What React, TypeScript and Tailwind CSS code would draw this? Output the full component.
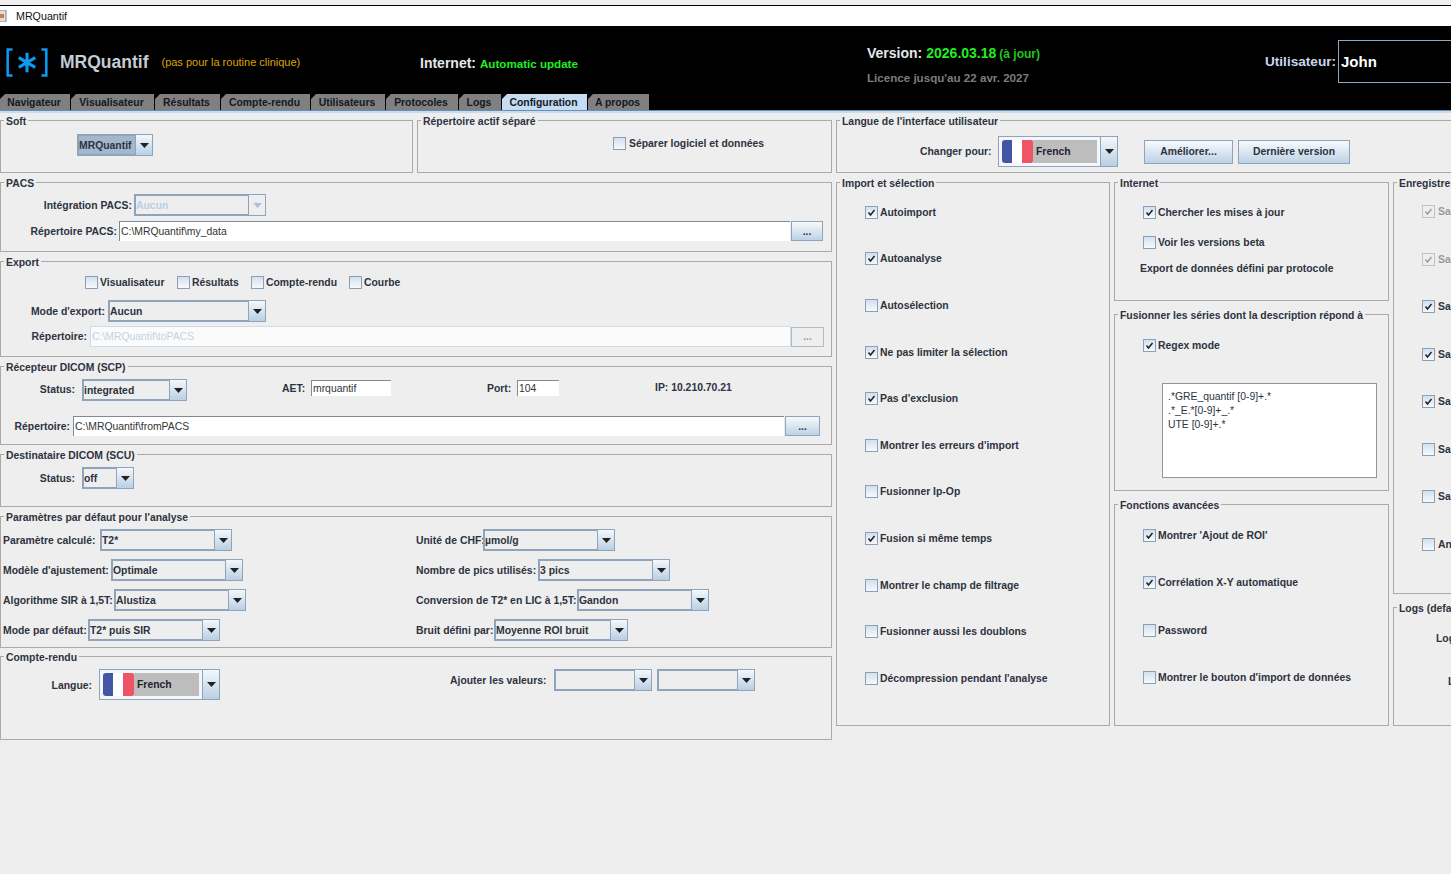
import React from "react";

const Check = ({ on, off, x }: { on?: boolean; off?: boolean; x?: string }) => (
  <span
    className={`w-[13px] h-[13px] shrink-0 border flex items-center justify-center ${
      off
        ? "border-[#b8c4d0] bg-[#eeeeee]"
        : "border-[#8aa0b8] bg-gradient-to-b from-[#d3e0ee] to-[#f6f9fc]"
    } ${x || ""}`}
  >
    {on && (
      <svg width="9" height="9" viewBox="0 0 9 9">
        <path
          d="M1.5 4.5 L3.5 7 L7.5 2"
          fill="none"
          stroke={off ? "#a0a0a0" : "#222"}
          strokeWidth="1.5"
        />
      </svg>
    )}
  </span>
);

const CheckRow = ({
  label,
  on,
  off,
  h,
}: {
  label: string;
  on?: boolean;
  off?: boolean;
  h?: string;
}) => (
  <div className={`flex items-center gap-[2px] whitespace-nowrap ${h || ""}`}>
    <Check on={on} off={off} />
    <span className={off ? "text-[#9a9a9a]" : ""}>{label}</span>
  </div>
);

const Arrow = ({ dim }: { dim?: boolean }) => (
  <svg width="9" height="5" viewBox="0 0 9 5">
    <path d="M0 0 H9 L4.5 5 Z" fill={dim ? "#a9c2dc" : "#222"} />
  </svg>
);

const Combo = ({
  value,
  w,
  h = "h-[22px]",
  dim,
  selected,
}: {
  value?: string;
  w: string;
  h?: string;
  dim?: boolean;
  selected?: boolean;
}) => (
  <div className={`flex shrink-0 border border-[#8ea4bb] ${w} ${h}`}>
    <div
      className={`flex-1 min-w-0 flex items-center pl-[0px] border border-[#8ea4bb] whitespace-nowrap overflow-hidden ${
        selected ? "bg-[#a3b8cc]" : ""
      } ${dim ? "text-[#bcd0e4]" : ""}`}
    >
      {value}
    </div>
    <div
      className={`w-[16px] shrink-0 flex items-center justify-center ${
        dim ? "bg-[#eeeeee]" : "bg-gradient-to-b from-[#f4f8fb] to-[#b9cfe4]"
      }`}
    >
      <Arrow dim={dim} />
    </div>
  </div>
);

const FlagCombo = ({ w, h }: { w: string; h: string }) => (
  <div className={`flex shrink-0 border border-[#8ea4bb] ${w} ${h}`}>
    <div className="flex-1 flex items-center bg-[#f4f6f9] border-r border-[#8ea4bb] pl-[3px] pr-[3px] py-[3px]">
      <div className="w-[10px] h-full bg-[#4355a5] rounded-l-[3px]" />
      <div className="w-[10px] h-full bg-white" />
      <div className="w-[11px] h-full bg-[#ef5466] rounded-r-[2px]" />
      <div className="flex-1 h-full bg-[#bdbdbd] flex items-center pl-[3px] text-[#1d2430]">
        French
      </div>
    </div>
    <div className="w-[16px] flex items-center justify-center bg-gradient-to-b from-[#f4f8fb] to-[#b9cfe4]">
      <Arrow />
    </div>
  </div>
);

const Input = ({
  value,
  w,
  h = "h-[20px]",
  dim,
}: {
  value: string;
  w: string;
  h?: string;
  dim?: boolean;
}) => (
  <div
    className={`shrink-0 flex items-center pl-[1px] font-normal whitespace-nowrap overflow-hidden ${
      dim
        ? "bg-[#fbfbfb] border border-[#cfdbe8] text-[#c4d2e2]"
        : "bg-white border-l border-t border-[#7d8a98] text-[#333333]"
    } ${w} ${h}`}
  >
    {value}
  </div>
);

const Dots = ({ w, off }: { w: string; off?: boolean }) => (
  <div
    className={`shrink-0 h-[20px] flex items-center justify-center border ${w} ${
      off
        ? "border-[#b0bcc8] bg-[#eeeeee] text-[#9a9a9a]"
        : "border-[#8ea4bb] bg-gradient-to-b from-[#f7fafc] to-[#bdd2e6]"
    }`}
  >
    ...
  </div>
);

const Group = ({
  title,
  className,
  children,
}: {
  title: string;
  className: string;
  children?: React.ReactNode;
}) => (
  <div className={`relative shrink-0 border border-[#a9a9a9] ${className}`}>
    <span className="absolute -top-[6px] left-[3px] bg-[#eeeeee] px-[2px] leading-[13px] whitespace-nowrap">
      {title}
    </span>
    {children}
  </div>
);

const tabs = [
  { label: "Navigateur", w: "w-[71px]" },
  { label: "Visualisateur", w: "w-[84px]" },
  { label: "Résultats", w: "w-[66px]" },
  { label: "Compte-rendu", w: "w-[90px]" },
  { label: "Utilisateurs", w: "w-[75px]" },
  { label: "Protocoles", w: "w-[73px]" },
  { label: "Logs", w: "w-[43px]" },
  { label: "Configuration", w: "w-[86px]", active: true },
  { label: "A propos", w: "w-[62px]" },
];

const importItems = [
  { label: "Autoimport", on: true },
  { label: "Autoanalyse", on: true },
  { label: "Autosélection" },
  { label: "Ne pas limiter la sélection", on: true },
  { label: "Pas d'exclusion", on: true },
  { label: "Montrer les erreurs d'import" },
  { label: "Fusionner Ip-Op" },
  { label: "Fusion si même temps", on: true },
  { label: "Montrer le champ de filtrage" },
  { label: "Fusionner aussi les doublons" },
  { label: "Décompression pendant l'analyse" },
];

const saveItems = [
  { label: "Sa", on: true, off: true },
  { label: "Sa", on: true, off: true },
  { label: "Sa", on: true },
  { label: "Sa", on: true },
  { label: "Sa", on: true },
  { label: "Sa" },
  { label: "Sa" },
  { label: "An" },
];

const paramRows = [
  {
    l: "Paramètre calculé:",
    lw: "w-[95px]",
    v: "T2*",
    r: "Unité de CHF:",
    rl: "w-[65px]",
    rv: "µmol/g",
    rw: "w-[132px]",
  },
  {
    l: "Modèle d'ajustement:",
    lw: "w-[106px]",
    v: "Optimale",
    r: "Nombre de pics utilisés:",
    rl: "w-[120px]",
    rv: "3 pics",
    rw: "w-[132px]",
  },
  {
    l: "Algorithme SIR à 1,5T:",
    lw: "w-[109px]",
    v: "Alustiza",
    r: "Conversion de T2* en LIC à 1,5T:",
    rl: "w-[159px]",
    rv: "Gandon",
    rw: "w-[132px]",
  },
  {
    l: "Mode par défaut:",
    lw: "w-[83px]",
    v: "T2* puis SIR",
    r: "Bruit défini par:",
    rl: "w-[76px]",
    rv: "Moyenne ROI bruit",
    rw: "w-[134px]",
  },
];

export default function App() {
  return (
    <div className="w-[1451px] h-[874px] overflow-hidden bg-[#eeeeee] text-[10.4px] leading-[13px] font-bold text-[#2d3340] font-['Liberation_Sans',Arial,sans-serif]">
      {/* window title */}
      <div className="h-[5px] bg-[#f0f0f0]" />
      <div className="h-[21px] bg-white border-t border-black flex items-center pl-[16px] font-normal text-[#111] text-[10.7px] relative">
        <svg className="absolute left-0 top-[4px]" width="7" height="12" viewBox="0 0 7 12">
          <rect x="-6" y="0" width="12" height="12" fill="#d8dde6" stroke="#7a8796" />
          <rect x="0" y="4" width="4" height="4" fill="#d9793a" />
        </svg>
        MRQuantif
      </div>

      {/* header */}
      <div className="h-[84px] bg-black flex flex-col">
        <div className="h-[68px] flex">
          <div className="w-[420px] flex items-center h-[72px] shrink-0 whitespace-nowrap">
            <svg className="ml-[5px]" width="44" height="29" viewBox="0 0 44 30">
              <path d="M7 1.5 H2 V28.5 H7 M37 1.5 H42 V28.5 H37" fill="none" stroke="#0a9cf0" strokeWidth="2.6" />
              <path d="M22 5 V25 M13.5 10 L30.5 20 M30.5 10 L13.5 20" fill="none" stroke="#0a9cf0" strokeWidth="3.2" />
            </svg>
            <span className="ml-[11px] text-[17.5px] leading-[20px] text-[#c4ccd4]">MRQuantif</span>
            <span className="ml-[13px] text-[11px] font-normal text-[#dda600]">(pas pour la routine clinique)</span>
          </div>
          <div className="w-[447px] shrink-0 flex items-baseline pt-[29px] whitespace-nowrap">
            <span className="text-[14px] leading-[16px] text-[#e4e8ec]">Internet:</span>
            <span className="ml-[4px] text-[11.6px] leading-[16px] text-[#22ee22]">Automatic update</span>
          </div>
          <div className="w-[398px] shrink-0 pt-[19px] whitespace-nowrap">
            <div className="flex items-baseline leading-[16px]">
              <span className="text-[14px] text-[#e4e8ec]">Version:</span>
              <span className="ml-[4px] text-[14px] text-[#22ee22]">2026.03.18</span>
              <span className="ml-[3px] text-[12px] text-[#1fc81f]">(à jour)</span>
            </div>
            <div className="mt-[8px] text-[11.6px] leading-[16px] text-[#7d7d7d]">Licence jusqu'au 22 avr. 2027</div>
          </div>
          <div className="flex-1 flex items-center h-[71px] whitespace-nowrap">
            <span className="text-[13.6px] text-[#c8d8e8]">Utilisateur:</span>
            <div className="ml-[2px] w-[130px] h-[43px] border border-[#8fa8c4] flex items-center pl-[2px] text-[15px] text-white">
              John
            </div>
          </div>
        </div>
        <div className="h-[16px] flex items-end">
          {tabs.map((t) => (
            <div key={t.label} className={`h-[16px] shrink-0 pr-[1px] ${t.w}`}>
              <div
                className={`h-full flex items-center justify-center pr-[2px] text-[#14181f] [clip-path:polygon(5px_0,100%_0,100%_100%,0_100%,0_5px)] ${
                  t.active ? "bg-[#c6dcf3]" : "bg-[#808080]"
                }`}
              >
                {t.label}
              </div>
            </div>
          ))}
        </div>
      </div>
      <div className="h-[3px] bg-[#c6dcf3] border-t border-[#6d8db0]" />

      {/* content */}
      <div className="pt-[7px]">
        <div className="flex gap-[4px] h-[53px] w-[1600px]">
          <Group title="Soft" className="w-[413px] h-[53px] pl-[76px] pt-[13px]">
            <Combo value="MRQuantif" w="w-[76px]" selected />
          </Group>
          <Group title="Répertoire actif séparé" className="w-[415px] h-[53px] pl-[195px] pt-[16px]">
            <div className="flex items-center gap-[3px]">
              <Check />
              <span>Séparer logiciel et données</span>
            </div>
          </Group>
          <Group title="Langue de l'interface utilisateur" className="w-[760px] h-[53px] pl-[83px] pt-[15px]">
            <div className="flex items-center">
              <span className="w-[72px] mr-[6px] whitespace-nowrap">Changer pour:</span>
              <FlagCombo w="w-[120px]" h="h-[31px]" />
              <div className="ml-[26px] w-[89px] h-[24px] flex items-center justify-center border border-[#8ea4bb] bg-gradient-to-b from-[#f7fafc] to-[#bdd2e6]">
                Améliorer...
              </div>
              <div className="ml-[5px] w-[112px] h-[24px] flex items-center justify-center border border-[#8ea4bb] bg-gradient-to-b from-[#f7fafc] to-[#bdd2e6]">
                Dernière version
              </div>
            </div>
          </Group>
        </div>

        <div className="flex gap-[4px] mt-[9px] w-[1600px]">
          {/* left column */}
          <div className="w-[832px] shrink-0 flex flex-col">
            <Group title="PACS" className="h-[70px] pt-[11px]">
              <div className="flex items-center">
                <span className="w-[131px] text-right">Intégration PACS:</span>
                <div className="ml-[2px]">
                  <Combo value="Aucun" w="w-[132px]" dim />
                </div>
              </div>
              <div className="flex items-center mt-[5px]">
                <span className="w-[116px] text-right">Répertoire PACS:</span>
                <div className="ml-[2px]">
                  <Input value="C:\MRQuantif\my_data" w="w-[671px]" />
                </div>
                <div className="ml-[1px]">
                  <Dots w="w-[32px]" />
                </div>
              </div>
            </Group>
            <Group title="Export" className="h-[96px] mt-[9px] pt-[14px]">
              <div className="flex items-center pl-[84px]">
                <div className="w-[92px]"><CheckRow label="Visualisateur" /></div>
                <div className="w-[74px]"><CheckRow label="Résultats" /></div>
                <div className="w-[98px]"><CheckRow label="Compte-rendu" /></div>
                <CheckRow label="Courbe" />
              </div>
              <div className="flex items-center mt-[11px]">
                <span className="w-[104px] text-right">Mode d'export:</span>
                <div className="ml-[3px]">
                  <Combo value="Aucun" w="w-[158px]" />
                </div>
              </div>
              <div className="flex items-center mt-[4px]">
                <span className="w-[86px] text-right">Répertoire:</span>
                <div className="ml-[3px]">
                  <Input value="C:\MRQuantif\toPACS" w="w-[701px]" h="h-[21px]" dim />
                </div>
                <Dots w="w-[33px]" off />
              </div>
            </Group>
            <Group title="Récepteur DICOM (SCP)" className="h-[79px] mt-[9px] pt-[12px]">
              <div className="flex items-start">
                <span className="w-[74px] text-right h-[22px] leading-[22px]">Status:</span>
                <div className="ml-[7px]">
                  <Combo value="integrated" w="w-[105px]" />
                </div>
                <span className="ml-[95px] w-[22px] leading-[20px]">AET:</span>
                <div className="ml-[7px] mt-[1px]">
                  <Input value="mrquantif" w="w-[80px]" h="h-[16px]" />
                </div>
                <span className="ml-[96px] w-[24px] leading-[20px]">Port:</span>
                <div className="ml-[6px] mt-[1px]">
                  <Input value="104" w="w-[42px]" h="h-[16px]" />
                </div>
                <span className="ml-[96px] mt-[2px] leading-[14px]">IP: 10.210.70.21</span>
              </div>
              <div className="flex items-center mt-[15px]">
                <span className="w-[69px] text-right">Répertoire:</span>
                <div className="ml-[3px]">
                  <Input value="C:\MRQuantif\fromPACS" w="w-[711px]" />
                </div>
                <div className="ml-[1px]">
                  <Dots w="w-[35px]" />
                </div>
              </div>
            </Group>
            <Group title="Destinataire DICOM (SCU)" className="h-[53px] mt-[9px] pt-[12px]">
              <div className="flex items-center">
                <span className="w-[74px] text-right">Status:</span>
                <div className="ml-[7px]">
                  <Combo value="off" w="w-[52px]" />
                </div>
              </div>
            </Group>
            <Group title="Paramètres par défaut pour l'analyse" className="h-[132px] mt-[9px] pt-[12px]">
              <div className="flex flex-col gap-[8px]">
                {paramRows.map((row) => (
                  <div key={row.l} className="flex items-center h-[22px]">
                    <div className="w-[415px] shrink-0 flex items-center pl-[2px]">
                      <span className={`whitespace-nowrap ${row.lw}`}>{row.l}</span>
                      <div className="ml-[2px]">
                        <Combo value={row.v} w="w-[132px]" />
                      </div>
                    </div>
                    <span className={`whitespace-nowrap ${row.rl}`}>{row.r}</span>
                    <div className="ml-[2px]">
                      <Combo value={row.rv} w={row.rw} />
                    </div>
                  </div>
                ))}
              </div>
            </Group>
            <Group title="Compte-rendu" className="h-[84px] mt-[8px] pt-[12px]">
              <div className="flex items-start">
                <span className="w-[91px] text-right leading-[33px]">Langue:</span>
                <div className="ml-[7px]">
                  <FlagCombo w="w-[121px]" h="h-[31px]" />
                </div>
                <span className="ml-[230px] w-[97px] leading-[24px] whitespace-nowrap">Ajouter les valeurs:</span>
                <div className="ml-[7px]">
                  <Combo w="w-[98px]" />
                </div>
                <div className="ml-[5px]">
                  <Combo w="w-[98px]" />
                </div>
              </div>
            </Group>
          </div>

          {/* import */}
          <Group title="Import et sélection" className="w-[274px] h-[544px] pl-[28px] pt-[6px]">
            {importItems.map((it) => (
              <CheckRow key={it.label} label={it.label} on={it.on} h="h-[46.6px]" />
            ))}
          </Group>

          {/* internet + regex + advanced */}
          <div className="w-[275px] shrink-0 flex flex-col">
            <Group title="Internet" className="h-[119px] pl-[28px] pt-[23px]">
              <CheckRow label="Chercher les mises à jour" on h="h-[13px]" />
              <CheckRow label="Voir les versions beta" h="h-[13px] mt-[17px]" />
              <div className="-ml-[3px] mt-[13px] h-[13px] whitespace-nowrap">Export de données défini par protocole</div>
            </Group>
            <Group title="Fusionner les séries dont la description répond à" className="h-[177px] mt-[13px] pl-[28px] pt-[24px]">
              <CheckRow label="Regex mode" on h="h-[13px]" />
              <div className="ml-[19px] mt-[31px] w-[215px] h-[95px] bg-white border border-[#8a97a5] pl-[5px] pt-[6px] font-normal leading-[14px]">
                <div>.*GRE_quantif [0-9]+.*</div>
                <div>.*_E.*[0-9]+_.*</div>
                <div>UTE [0-9]+.*</div>
              </div>
            </Group>
            <Group title="Fonctions avancées" className="h-[222px] mt-[13px] pl-[28px] pt-[24px]">
              <CheckRow label="Montrer 'Ajout de ROI'" on h="h-[13px]" />
              <CheckRow label="Corrélation X-Y automatique" on h="h-[13px] mt-[34px]" />
              <CheckRow label="Password" h="h-[13px] mt-[35px]" />
              <CheckRow label="Montrer le bouton d'import de données" h="h-[13px] mt-[34px]" />
            </Group>
          </div>

          {/* save + logs */}
          <div className="w-[200px] shrink-0 flex flex-col">
            <Group title="Enregistrement" className="h-[412px] pl-[28px] pt-[5px]">
              {saveItems.map((it, i) => (
                <div key={i} className="h-[47.5px] flex items-center gap-[3px]">
                  <Check on={it.on} off={it.off} />
                  <span className={it.off ? "text-[#9a9a9a]" : ""}>{it.label}</span>
                </div>
              ))}
            </Group>
            <Group title="Logs (default)" className="h-[119px] mt-[13px] pt-[24px] pl-[42px]">
              <div>Log</div>
              <div className="mt-[30px] pl-[12px]">L</div>
            </Group>
          </div>
        </div>
      </div>
    </div>
  );
}
